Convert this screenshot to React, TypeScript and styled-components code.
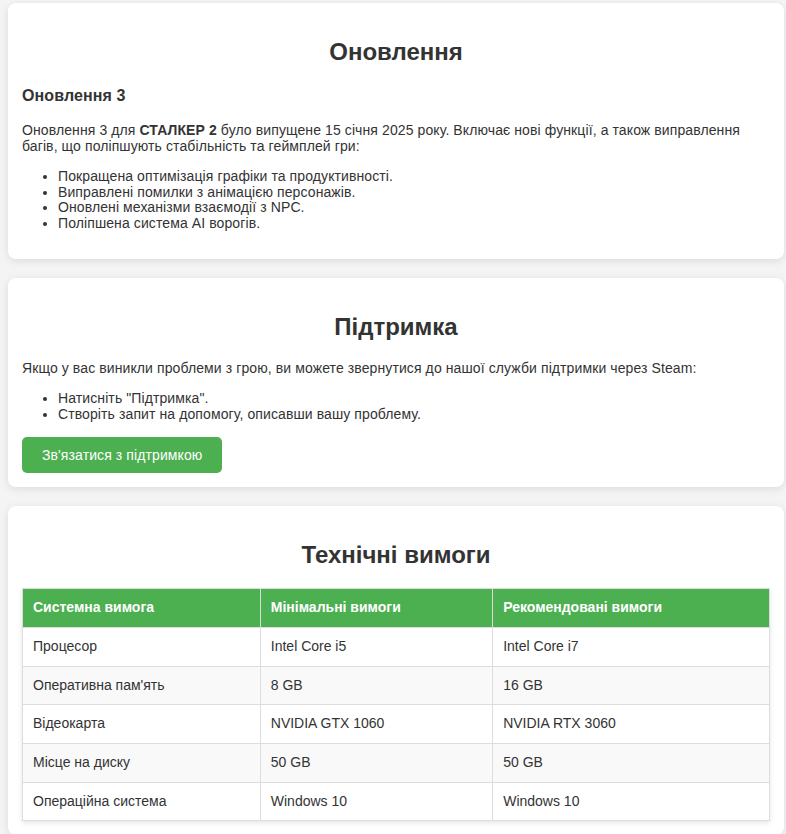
import React from "react";
import styled, { createGlobalStyle } from "styled-components";

const GlobalStyle = createGlobalStyle`
  html, body {
    margin: 0;
    padding: 0;
    background: #f4f4f4;
  }
  body {
    font-family: "Liberation Sans", Arial, sans-serif;
    font-size: 14px;
    color: #333;
    letter-spacing: 0.1px;
  }
`;

const Page = styled.main`
  padding: 3px 2px 0 8px;
`;

const Card = styled.section`
  background: #fff;
  border-radius: 8px;
  box-shadow: 0 2px 8px rgba(0, 0, 0, 0.1);
  padding: 14px;
  margin-bottom: 19px;
  display: flow-root;
`;

const Title = styled.h2`
  font-size: 24px;
  font-weight: bold;
  text-align: center;
  margin: 21px 0 19px;
  color: #333;
  letter-spacing: 0;
`;

const SubTitle = styled.h3`
  font-size: 16px;
  font-weight: bold;
  margin: 21px 0 17px;
`;

const Text = styled.p`
  margin: 14px 0;
  line-height: 16px;
`;

const List = styled.ul`
  margin: 15px 0 13px;
  padding-left: 36px;
  line-height: 15.7px;
`;

const Button = styled.button`
  display: block;
  margin-top: 15px;
  background: #4caf50;
  color: #fff;
  border: none;
  border-radius: 5px;
  padding: 10px 20px;
  font-family: "Liberation Sans", Arial, sans-serif;
  font-size: 14px;
  line-height: 16px;
  letter-spacing: 0.1px;
  cursor: pointer;
`;

const Table = styled.table`
  width: 100%;
  border-collapse: collapse;
  box-shadow: 0 2px 5px rgba(0, 0, 0, 0.1);
  letter-spacing: 0;
`;

const Th = styled.th`
  background: #4caf50;
  color: #fff;
  text-align: left;
  font-weight: bold;
  padding: 10px;
  line-height: 17.7px;
  border: 1px solid #ddd;
`;

const Td = styled.td`
  padding: 10px;
  line-height: 17.7px;
  border: 1px solid #ddd;
`;

const Row = styled.tr<{ $alt?: boolean }>`
  background: ${(p) => (p.$alt ? "#f9f9f9" : "#fff")};
`;

const specs: [string, string, string][] = [
  ["Процесор", "Intel Core i5", "Intel Core i7"],
  ["Оперативна пам'ять", "8 GB", "16 GB"],
  ["Відеокарта", "NVIDIA GTX 1060", "NVIDIA RTX 3060"],
  ["Місце на диску", "50 GB", "50 GB"],
  ["Операційна система", "Windows 10", "Windows 10"],
];

export default function App() {
  return (
    <>
      <GlobalStyle />
      <Page>
        <Card>
          <Title>Оновлення</Title>
          <SubTitle>Оновлення 3</SubTitle>
          <Text>
            Оновлення 3 для <strong>СТАЛКЕР 2</strong> було випущене 15 січня 2025 року. Включає нові функції, а також виправлення багів, що поліпшують стабільність та геймплей гри:
          </Text>
          <List>
            <li>Покращена оптимізація графіки та продуктивності.</li>
            <li>Виправлені помилки з анімацією персонажів.</li>
            <li>Оновлені механізми взаємодії з NPC.</li>
            <li>Поліпшена система AI ворогів.</li>
          </List>
        </Card>
        <Card>
          <Title>Підтримка</Title>
          <Text>Якщо у вас виникли проблеми з грою, ви можете звернутися до нашої служби підтримки через Steam:</Text>
          <List>
            <li>Натисніть "Підтримка".</li>
            <li>Створіть запит на допомогу, описавши вашу проблему.</li>
          </List>
          <Button>Зв'язатися з підтримкою</Button>
        </Card>
        <Card>
          <Title>Технічні вимоги</Title>
          <Table>
            <thead>
              <tr>
                <Th>Системна вимога</Th>
                <Th>Мінімальні вимоги</Th>
                <Th>Рекомендовані вимоги</Th>
              </tr>
            </thead>
            <tbody>
              {specs.map((r, i) => (
                <Row key={r[0]} $alt={i % 2 === 1}>
                  <Td>{r[0]}</Td>
                  <Td>{r[1]}</Td>
                  <Td>{r[2]}</Td>
                </Row>
              ))}
            </tbody>
          </Table>
        </Card>
      </Page>
    </>
  );
}
